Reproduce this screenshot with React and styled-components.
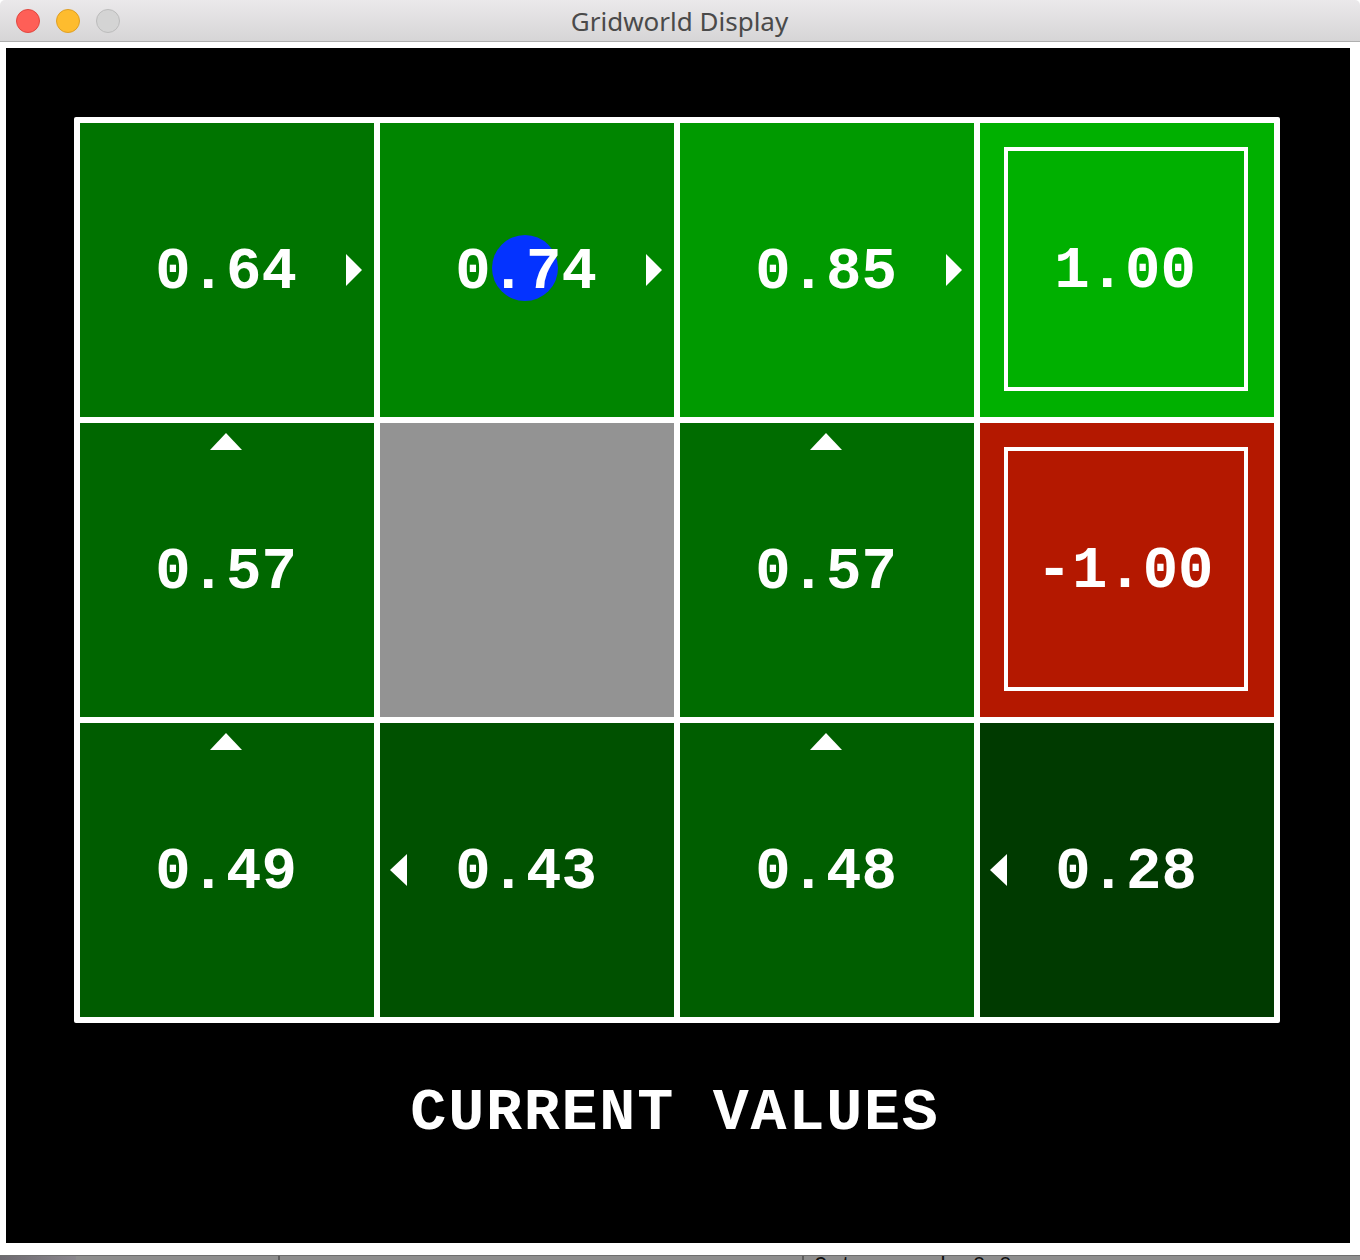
import React from 'react'
import styled, { createGlobalStyle } from 'styled-components'

const GlobalStyle = createGlobalStyle`
  html, body {
    margin: 0;
    padding: 0;
    background: #ffffff;
  }
  body {
    font-family: "Liberation Sans", Arial, sans-serif;
  }
`

const Window = styled.div`
  width: 1360px;
  height: 1260px;
  display: flex;
  flex-direction: column;
  overflow: hidden;
  background: #ffffff;
`

const TitleBar = styled.div`
  position: relative;
  height: 41px;
  flex: none;
  display: flex;
  align-items: center;
  justify-content: center;
  background: linear-gradient(to bottom, #ebe9eb 0%, #d6d5d6 100%);
  border-bottom: 1px solid #afafaf;
  border-top-left-radius: 5px;
  border-top-right-radius: 5px;
`

const Lights = styled.div`
  position: absolute;
  left: 16px;
  top: 9px;
  display: flex;
  gap: 16px;
`

const Light = styled.span`
  width: 24px;
  height: 24px;
  border-radius: 50%;
  box-sizing: border-box;
  background: ${p => p.fill};
  border: 1px solid ${p => p.edge};
`

const Title = styled.div`
  font-family: "Noto Sans", "Liberation Sans", Arial, sans-serif;
  font-size: 26px;
  color: #4a4a4a;
  margin-left: -1px;
  margin-top: 1px;
`

const Body = styled.div`
  flex: none;
  padding: 6px 10px 12px 6px;
`

const Canvas = styled.div`
  width: 1344px;
  height: 1195px;
  background: #000000;
  display: flex;
  flex-direction: column;
  align-items: center;
`

const Grid = styled.div`
  margin-top: 69px;
  margin-left: -2px;
  display: grid;
  grid-template-columns: repeat(4, 294px);
  grid-auto-rows: 294px;
  gap: 6px;
  padding: 6px;
  background: #ffffff;
  border-radius: 2px;
`

const Cell = styled.div`
  position: relative;
  background: ${p => p.bg};
  display: flex;
  align-items: center;
  justify-content: center;
  padding: ${p => (p.terminal ? '24px 26px 26px 24px' : '0')};
`

const Value = styled.span`
  position: relative;
  font-family: "Liberation Mono", "Courier New", monospace;
  font-weight: bold;
  font-size: 59px;
  color: #ffffff;
  line-height: 1;
  margin-top: 4px;
  margin-left: -2px;
`

const TerminalBox = styled.div`
  flex: 1;
  align-self: stretch;
  display: flex;
  align-items: center;
  justify-content: center;
  border: 4px solid #ffffff;
`

const Agent = styled.span`
  position: absolute;
  left: 112px;
  top: 112px;
  width: 66px;
  height: 66px;
  border-radius: 50%;
  background: #0433ff;
`

const Arrow = styled.svg`
  position: absolute;
  fill: #ffffff;
  ${p => p.dir === 'right' && 'right: 12px; top: 131px;'}
  ${p => p.dir === 'left' && 'left: 10px; top: 131px;'}
  ${p => p.dir === 'up' && 'top: 10px; left: 130px;'}
`

const Caption = styled.div`
  margin-top: 60px;
  margin-left: -6px;
  font-family: "Liberation Mono", "Courier New", monospace;
  font-weight: bold;
  font-size: 60px;
  color: #ffffff;
  letter-spacing: 1.8px;
  line-height: 1;
  white-space: pre;
`

const StatusStrip = styled.div`
  flex: none;
  height: 5px;
  display: flex;
  overflow: hidden;
  background: #8e8e8e;
  border-top: 1px solid #6f6f6f;
`

const StatusPart = styled.div`
  flex: ${p => (p.grow ? 1 : 'none')};
  width: ${p => (p.w ? `${p.w}px` : 'auto')};
  background: ${p => p.bg || 'transparent'};
  border-right: ${p => (p.divider ? '2px solid #5e5e5e' : 'none')};
  font-family: "Liberation Mono", "Courier New", monospace;
  font-size: 22px;
  line-height: 22px;
  color: #111111;
  padding-left: ${p => (p.pad ? `${p.pad}px` : '0')};
  white-space: pre;
`

function ArrowIcon({ dir }) {
  if (dir === 'up') {
    return (
      <Arrow dir="up" width="32" height="17" viewBox="0 0 32 17">
        <polygon points="0,17 16,0 32,17" />
      </Arrow>
    )
  }
  if (dir === 'left') {
    return (
      <Arrow dir="left" width="17" height="32" viewBox="0 0 17 32">
        <polygon points="17,0 0,16 17,32" />
      </Arrow>
    )
  }
  return (
    <Arrow dir="right" width="16" height="32" viewBox="0 0 16 32">
      <polygon points="0,0 16,16 0,32" />
    </Arrow>
  )
}

const cells = [
  { value: '0.64', bg: '#007400', arrow: 'right' },
  { value: '0.74', bg: '#008500', arrow: 'right', agent: true },
  { value: '0.85', bg: '#009a00', arrow: 'right' },
  { value: '1.00', bg: '#00b000', terminal: true },
  { value: '0.57', bg: '#006700', arrow: 'up' },
  { wall: true, bg: '#939393' },
  { value: '0.57', bg: '#006c00', arrow: 'up' },
  { value: '-1.00', bg: '#b41800', terminal: true },
  { value: '0.49', bg: '#005c00', arrow: 'up' },
  { value: '0.43', bg: '#005100', arrow: 'left' },
  { value: '0.48', bg: '#005e00', arrow: 'up' },
  { value: '0.28', bg: '#003a00', arrow: 'left' },
]

export default function App() {
  return (
    <>
      <GlobalStyle />
      <Window>
        <TitleBar>
          <Lights>
            <Light fill="#fe5f57" edge="#e1473f" />
            <Light fill="#febc2e" edge="#df9f24" />
            <Light fill="#d4d4d4" edge="#bcbcbc" />
          </Lights>
          <Title>Gridworld Display</Title>
        </TitleBar>
        <Body>
          <Canvas>
            <Grid>
              {cells.map((c, i) => (
                <Cell key={i} bg={c.bg} terminal={c.terminal}>
                  {c.agent && <Agent />}
                  {c.arrow && <ArrowIcon dir={c.arrow} />}
                  {c.terminal ? (
                    <TerminalBox>
                      <Value>{c.value}</Value>
                    </TerminalBox>
                  ) : (
                    !c.wall && <Value>{c.value}</Value>
                  )}
                </Cell>
              ))}
            </Grid>
            <Caption>CURRENT VALUES</Caption>
          </Canvas>
        </Body>
        <StatusStrip>
          <StatusPart w={76} bg="linear-gradient(to right, #6d6a70, #8a878d)" />
          <StatusPart w={202} divider />
          <StatusPart w={522} divider />
          <StatusPart grow pad={10}>Get reward: 0.0</StatusPart>
        </StatusStrip>
      </Window>
    </>
  )
}
